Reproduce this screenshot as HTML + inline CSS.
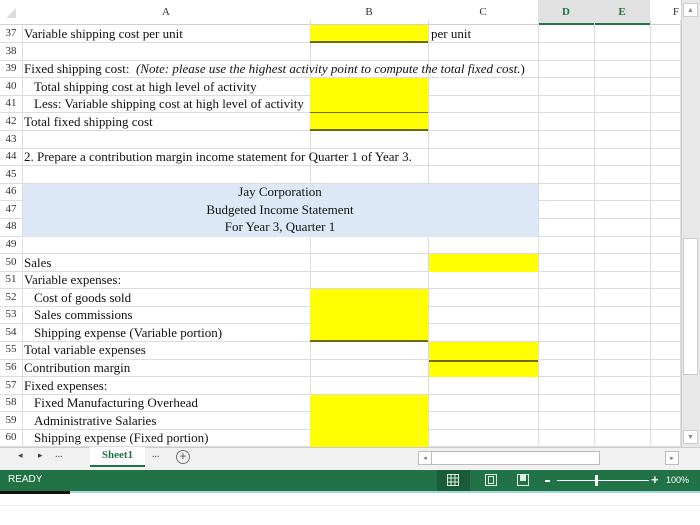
<!DOCTYPE html>
<html><head><meta charset="utf-8"><style>
*{margin:0;padding:0;box-sizing:border-box}
body{width:700px;height:525px;overflow:hidden;background:#fff;position:relative;font-family:"Liberation Serif",serif;font-size:13px;color:#111}
.a{position:absolute}
.hl{position:absolute;left:0;width:681px;height:1px;background:#dcdcdc}
.vl{position:absolute;top:20px;height:427px;width:1px;background:#dcdcdc}
.y{position:absolute;background:#ffff00}
.t{position:absolute;white-space:nowrap;line-height:17.6px;height:17.6px}
.n{position:absolute;left:0;width:22px;text-align:center;font-size:11px;line-height:17.6px;color:#333}
.hd{position:absolute;top:0;height:25px;line-height:25px;text-align:center;font-size:11px;color:#333}
</style></head><body>
<div class="a" style="left:0;top:0;width:681px;height:25px;background:#fff;border-bottom:1px solid #d0d0d0"></div>
<div class="a" style="left:6px;top:8px;width:0;height:0;border-left:10px solid transparent;border-bottom:10px solid #ddd"></div>
<div class="hd" style="left:22px;width:288px">A</div>
<div class="hd" style="left:310px;width:118px">B</div>
<div class="hd" style="left:428px;width:110px">C</div>
<div class="hd" style="left:538px;width:56px;background:#e1e1e1;color:#217346;font-weight:bold;border-bottom:2px solid #217346">D</div>
<div class="hd" style="left:594px;width:56px;background:#e1e1e1;color:#217346;font-weight:bold;border-bottom:2px solid #217346">E</div>
<div class="hd" style="left:650px;width:31px;text-align:right;padding-right:2px">F</div>
<div class="vl" style="left:22px;top:25px;height:422px"></div>
<div class="vl" style="left:310px"></div>
<div class="vl" style="left:428px"></div>
<div class="vl" style="left:538px"></div>
<div class="vl" style="left:594px"></div>
<div class="vl" style="left:650px"></div>
<div class="vl" style="left:680px"></div>
<div class="hl" style="top:42px"></div><div class="hl" style="top:60px"></div><div class="hl" style="top:77px"></div><div class="hl" style="top:95px"></div><div class="hl" style="top:112px"></div><div class="hl" style="top:130px"></div><div class="hl" style="top:148px"></div><div class="hl" style="top:165px"></div><div class="hl" style="top:183px"></div><div class="hl" style="top:200px"></div><div class="hl" style="top:218px"></div><div class="hl" style="top:236px"></div><div class="hl" style="top:253px"></div><div class="hl" style="top:271px"></div><div class="hl" style="top:288px"></div><div class="hl" style="top:306px"></div><div class="hl" style="top:323px"></div><div class="hl" style="top:341px"></div><div class="hl" style="top:359px"></div><div class="hl" style="top:376px"></div><div class="hl" style="top:394px"></div><div class="hl" style="top:411px"></div><div class="hl" style="top:429px"></div><div class="hl" style="top:446px"></div>
<div class="a" style="left:23px;top:184px;width:515px;height:53px;background:#dce8f5"></div>
<div class="y" style="left:310px;top:25px;width:118px;height:18px;border-bottom:2px solid #6b6b00"></div>
<div class="y" style="left:310px;top:78px;width:118px;height:35px;border-bottom:1px solid #6b6b00"></div>
<div class="y" style="left:310px;top:113px;width:118px;height:18px;border-bottom:2px solid #6b6b00"></div>
<div class="y" style="left:429px;top:254px;width:109px;height:18px"></div>
<div class="y" style="left:310px;top:289px;width:118px;height:53px;border-bottom:2px solid #6b6b00"></div>
<div class="y" style="left:429px;top:342px;width:109px;height:35px"></div>
<div class="a" style="left:429px;top:360px;width:109px;height:1.5px;background:#6b6b00"></div>
<div class="y" style="left:310px;top:395px;width:118px;height:52px"></div>
<div class="n" style="top:25px">37</div><div class="n" style="top:42.6px">38</div><div class="n" style="top:60.2px">39</div><div class="n" style="top:77.7px">40</div><div class="n" style="top:95.3px">41</div><div class="n" style="top:112.9px">42</div><div class="n" style="top:130.5px">43</div><div class="n" style="top:148.1px">44</div><div class="n" style="top:165.6px">45</div><div class="n" style="top:183.2px">46</div><div class="n" style="top:200.8px">47</div><div class="n" style="top:218.4px">48</div><div class="n" style="top:236px">49</div><div class="n" style="top:253.5px">50</div><div class="n" style="top:271.1px">51</div><div class="n" style="top:288.7px">52</div><div class="n" style="top:306.3px">53</div><div class="n" style="top:323.9px">54</div><div class="n" style="top:341.4px">55</div><div class="n" style="top:359px">56</div><div class="n" style="top:376.6px">57</div><div class="n" style="top:394.2px">58</div><div class="n" style="top:411.8px">59</div><div class="n" style="top:429.3px">60</div>
<div class="t" style="left:24px;top:25px">Variable shipping cost per unit</div>
<div class="t" style="left:431px;top:25px">per unit</div>
<div class="t" style="left:24px;top:60.2px">Fixed shipping cost:&nbsp; <i>(Note: please use the highest activity point to compute the total fixed cost.</i>)</div>
<div class="t" style="left:34px;top:77.7px">Total shipping cost at high level of activity</div>
<div class="t" style="left:34px;top:95.3px">Less: Variable shipping cost at high level of activity</div>
<div class="t" style="left:24px;top:112.9px">Total fixed shipping cost</div>
<div class="t" style="left:24px;top:148.1px">2. Prepare a contribution margin income statement for Quarter 1 of Year 3.</div>
<div class="t" style="left:160px;width:240px;text-align:center;top:183.2px">Jay Corporation</div>
<div class="t" style="left:160px;width:240px;text-align:center;top:200.8px">Budgeted Income Statement</div>
<div class="t" style="left:160px;width:240px;text-align:center;top:218.4px">For Year 3, Quarter 1</div>
<div class="t" style="left:24px;top:253.5px">Sales</div>
<div class="t" style="left:24px;top:271.1px">Variable expenses:</div>
<div class="t" style="left:34px;top:288.7px">Cost of goods sold</div>
<div class="t" style="left:34px;top:306.3px">Sales commissions</div>
<div class="t" style="left:34px;top:323.9px">Shipping expense (Variable portion)</div>
<div class="t" style="left:24px;top:341.4px">Total variable expenses</div>
<div class="t" style="left:24px;top:359px">Contribution margin</div>
<div class="t" style="left:24px;top:376.6px">Fixed expenses:</div>
<div class="t" style="left:34px;top:394.2px">Fixed Manufacturing Overhead</div>
<div class="t" style="left:34px;top:411.8px">Administrative Salaries</div>
<div class="t" style="left:34px;top:429.3px">Shipping expense (Fixed portion)</div>
<div class="a" style="left:681px;top:0;width:19px;height:447px;background:#e8e8e8;border-left:1px solid #d0d0d0"></div>
<div class="a" style="left:683px;top:3px;width:15px;height:14px;background:#fff;border:1px solid #ccc;font-size:7px;text-align:center;line-height:12px;color:#888">▲</div>
<div class="a" style="left:683px;top:238px;width:15px;height:137px;background:#fff;border:1px solid #ccc"></div>
<div class="a" style="left:683px;top:430px;width:15px;height:14px;background:#fff;border:1px solid #ccc;font-size:7px;text-align:center;line-height:12px;color:#888">▼</div>
<div class="a" style="left:0;top:447px;width:700px;height:23px;background:#f1f1f1;border-top:1px solid #ccc"></div>
<div class="a" style="left:18px;top:450px;font-size:9px;color:#444">◂</div>
<div class="a" style="left:38px;top:450px;font-size:9px;color:#444">▸</div>
<div class="a" style="left:55px;top:449px;font-size:10px;color:#444">...</div>
<div class="a" style="left:90px;top:447px;width:55px;height:20px;background:#fff;border-bottom:2px solid #217346;text-align:center;font-weight:bold;font-size:11px;color:#217346;line-height:16px">Sheet1</div>
<div class="a" style="left:152px;top:449px;font-size:10px;color:#444">...</div>
<div class="a" style="left:176px;top:450px;width:14px;height:14px;border:1px solid #777;border-radius:50%;font-size:12px;line-height:11px;text-align:center;color:#555;font-family:'Liberation Sans',sans-serif">+</div>
<div class="a" style="left:418px;top:451px;width:182px;height:14px;background:#fff;border:1px solid #bbb"></div>
<div class="a" style="left:418px;top:451px;width:14px;height:14px;border:1px solid #bbb;font-size:7px;text-align:center;line-height:12px;color:#777">◂</div>
<div class="a" style="left:665px;top:451px;width:14px;height:14px;background:#fff;border:1px solid #bbb;font-size:7px;text-align:center;line-height:12px;color:#777">▸</div>
<div class="a" style="left:0;top:470px;width:700px;height:21px;background:#217346"></div>
<div class="a" style="left:8px;top:474px;color:#fff;font-family:'Liberation Sans',sans-serif;font-size:10px">READY</div>
<div class="a" style="left:437px;top:470px;width:33px;height:21px;background:#1a5c38"></div>
<svg class="a" style="left:446px;top:473px" width="110" height="15" viewBox="0 0 110 15">
<g fill="none" stroke="#e0efe6" stroke-width="1">
<rect x="1.5" y="1.5" width="11" height="11"/><path d="M5 1.5v11M9 1.5v11M1.5 5h11M1.5 9h11"/>
<rect x="39.5" y="1.5" width="11" height="11"/><rect x="42.5" y="3.5" width="5" height="7"/>
<rect x="71.5" y="1.5" width="11" height="11"/></g>
<rect x="74" y="2" width="6" height="6" fill="#e0efe6"/>
</svg>
<div class="a" style="left:545px;top:480px;width:5px;height:2px;background:#fff"></div>
<div class="a" style="left:557px;top:480px;width:92px;height:1px;background:#fff"></div>
<div class="a" style="left:595px;top:475px;width:3px;height:11px;background:#fff"></div>
<div class="a" style="left:651px;top:472px;color:#fff;font-family:'Liberation Sans',sans-serif;font-size:13px;font-weight:bold">+</div>
<div class="a" style="left:666px;top:475px;color:#fff;font-family:'Liberation Sans',sans-serif;font-size:9px">100%</div>
<div class="a" style="left:0;top:491px;width:70px;height:3px;background:#111"></div>
<div class="a" style="left:70px;top:491px;width:630px;height:2px;background:#9fd8e0"></div>
<div class="a" style="left:0;top:505px;width:700px;height:1px;background:#eee"></div>
</body></html>
